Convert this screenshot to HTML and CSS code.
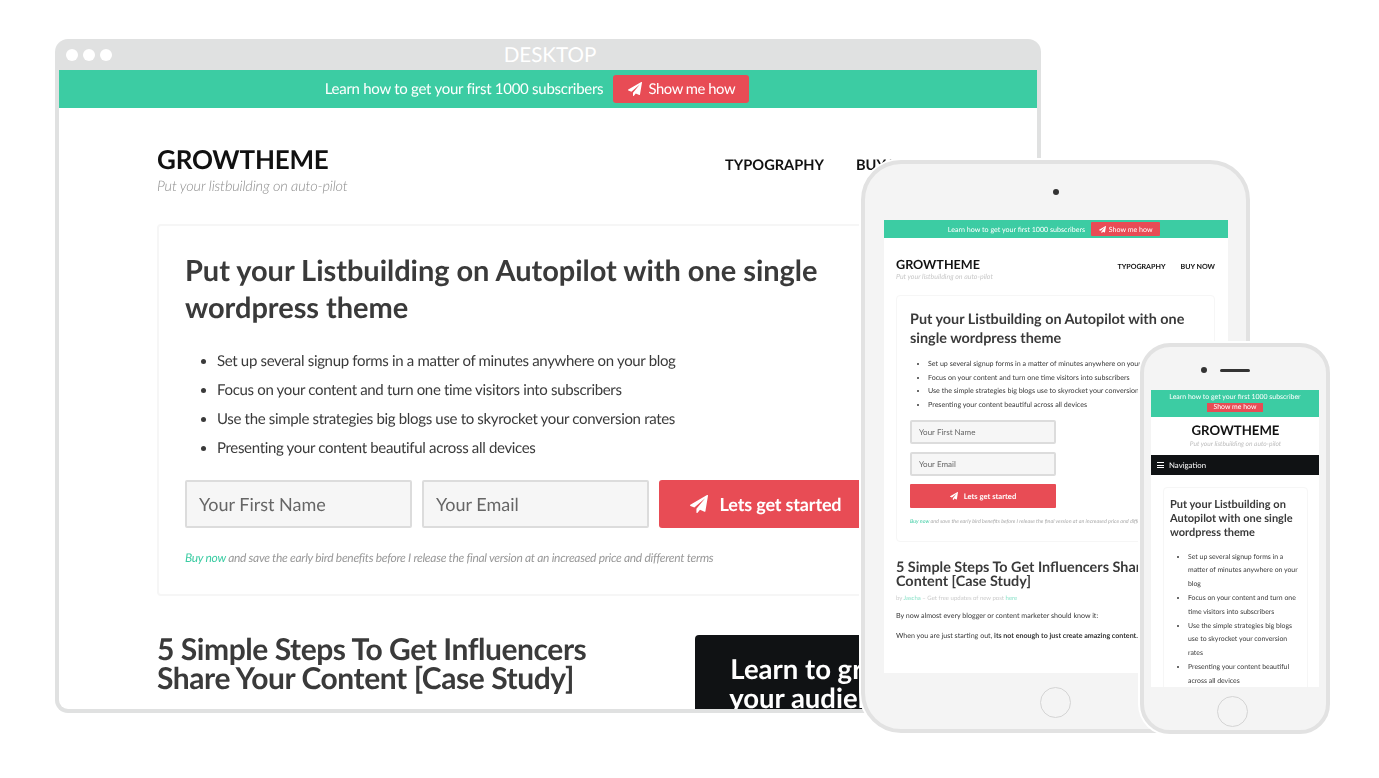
FILE: index.html
```html
<!DOCTYPE html>
<html lang="en">
<head>
<meta charset="utf-8">
<title>GrowTheme</title>
<link rel="stylesheet" href="styles.css">
</head>
<body>
<svg class="sprite" aria-hidden="true"><symbol id="plane" viewBox="0 0 1792 1792"><path d="M1764 11q33 24 27 64l-256 1536q-5 29-32 45-14 8-31 8-11 0-24-5l-453-185-242 295q-18 23-49 23-13 0-22-4-19-7-30.5-23.5t-11.5-36.5v-349l864-1059-1069 925-395-162q-37-14-40-55-2-40 32-59l1664-960q15-9 32-9 20 0 36 11z"/></symbol></svg>
<main class="stage">

  <section class="desktop">
    <div class="titlebar">
      <div class="dots"><i></i><i></i><i></i></div>
      <div class="title">DESKTOP</div>
    </div>
    <div class="screen">
      <div class="banner">
        <span>Learn how to get your first 1000 subscribers</span>
        <a class="banner-btn"><svg class="plane"><use href="#plane"/></svg>Show me how</a>
      </div>
      <div class="wrap">
        <header class="head">
          <div>
            <div class="logo">GROWTHEME</div>
            <div class="tag">Put your listbuilding on auto-pilot</div>
          </div>
          <nav class="nav"><a>TYPOGRAPHY</a><a>BUY NOW</a></nav>
        </header>
        <div class="card">
          <h1>Put your Listbuilding on Autopilot with one single wordpress theme</h1>
          <ul>
            <li>Set up several signup forms in a matter of minutes anywhere on your blog</li>
            <li>Focus on your content and turn one time visitors into subscribers</li>
            <li>Use the simple strategies big blogs use to skyrocket your conversion rates</li>
            <li>Presenting your content beautiful across all devices</li>
          </ul>
          <div class="form">
            <div class="field">Your First Name</div>
            <div class="field">Your Email</div>
            <a class="submit"><svg class="plane"><use href="#plane"/></svg>Lets get started</a>
          </div>
          <p class="note"><a>Buy now</a> and save the early bird benefits before I release the final version at an increased price and different terms</p>
        </div>
        <div class="lower">
          <h2>5 Simple Steps To Get Influencers Share Your Content [Case Study]</h2>
          <aside class="promo">Learn to grow<br>your audience</aside>
        </div>
      </div>
    </div>
  </section>

  <section class="tablet">
    <div class="camera"></div>
    <div class="screen">
      <div class="banner">
        <span>Learn how to get your first 1000 subscribers</span>
        <a class="banner-btn"><svg class="plane"><use href="#plane"/></svg>Show me how</a>
      </div>
      <div class="wrap">
        <header class="head">
          <div>
            <div class="logo">GROWTHEME</div>
            <div class="tag">Put your listbuilding on auto-pilot</div>
          </div>
          <nav class="nav"><a>TYPOGRAPHY</a><a>BUY NOW</a></nav>
        </header>
        <div class="card">
          <h1>Put your Listbuilding on Autopilot with one single wordpress theme</h1>
          <ul>
            <li>Set up several signup forms in a matter of minutes anywhere on your blog</li>
            <li>Focus on your content and turn one time visitors into subscribers</li>
            <li>Use the simple strategies big blogs use to skyrocket your conversion rates</li>
            <li>Presenting your content beautiful across all devices</li>
          </ul>
          <div class="form">
            <div class="field">Your First Name</div>
            <div class="field">Your Email</div>
            <a class="submit"><svg class="plane"><use href="#plane"/></svg>Lets get started</a>
          </div>
          <p class="note"><a>Buy now</a> and save the early bird benefits before I release the final version at an increased price and different terms</p>
        </div>
        <h2>5 Simple Steps To Get Influencers Share Your Content [Case Study]</h2>
        <p class="byline">by <a>Jascha</a> – Get free updates of new post <a>here</a></p>
        <p class="copy">By now almost every blogger or content marketer should know it:</p>
        <p class="copy">When you are just starting out, <b>its not enough to just create amazing content.</b></p>
      </div>
    </div>
    <div class="home"></div>
  </section>

  <section class="phone">
    <div class="earpiece"><div class="camera"></div><div class="speaker"></div></div>
    <div class="screen">
      <div class="banner">
        <span>Learn how to get your first 1000 subscriber</span>
        <a class="banner-btn">Show me how</a>
      </div>
      <div class="wrap">
        <div class="logo">GROWTHEME</div>
        <div class="tag">Put your listbuilding on auto-pilot</div>
      </div>
      <div class="mobile-nav"><span class="burger"><i></i><i></i><i></i></span>Navigation</div>
      <div class="card">
        <h1>Put your Listbuilding on Autopilot with one single wordpress theme</h1>
        <ul>
          <li>Set up several signup forms in a matter of minutes anywhere on your blog</li>
          <li>Focus on your content and turn one time visitors into subscribers</li>
          <li>Use the simple strategies big blogs use to skyrocket your conversion rates</li>
          <li>Presenting your content beautiful across all devices</li>
        </ul>
      </div>
    </div>
    <div class="home"></div>
  </section>

</main>
</body>
</html>
```

FILE: styles.css
```css
* { box-sizing: border-box; }
html, body { margin: 0; height: 100%; background: #fff; overflow: hidden; }
body { font-family: Lato, "Noto Sans", sans-serif; color: #3a3a3a; text-rendering: geometricPrecision; }
.sprite { display: none; }
.stage { position: relative; width: 1379px; height: 778px; }
h1, h2, p, ul { margin: 0; padding: 0; }
.plane { fill: #fff; flex: none; }
.banner, .banner-btn, .submit { display: flex; align-items: center; justify-content: center; color: #fff; }
.banner { background: #3ccca3; }
.banner-btn, .submit { background: #e84c55; }
.logo { font-weight: 700; color: #111; }
.tag { font-weight: 300; font-style: italic; color: #8c8c8c; }
.head { display: flex; justify-content: space-between; }
.nav { display: flex; font-weight: 700; color: #111; }
.card { background: #fff; border: 2px solid #f6f6f6; border-radius: 4px; }
h1, h2 { font-weight: 700; color: #3a3a3a; }
.field { background: #f6f6f6; border: 2px solid #dcdcdc; border-radius: 2px; display: flex; align-items: center; color: #666; }
.form { display: flex; }
.note { font-style: italic; color: #999; white-space: nowrap; }
.note a, .byline a { color: #3ccca3; }

/* Desktop window */
.desktop { position: absolute; left: 55px; top: 39px; width: 986px; height: 674px; background: #e0e1e1; border-radius: 13px; padding: 0 4px 4px; display: flex; flex-direction: column; }
.titlebar { height: 31px; flex: none; position: relative; display: flex; align-items: center; justify-content: center; }
.dots { position: absolute; left: 7px; top: 10px; display: flex; gap: 5px; }
.dots i { width: 12px; height: 12px; border-radius: 50%; background: #fff; }
.title { color: #fff; font-size: 20.6px; line-height: 31px; padding: 1px 0 0 4px; }
.desktop .screen { flex: 1; min-height: 0; background: #fff; overflow: hidden; border-radius: 0 0 9px 9px; filter: blur(0.25px); }
.desktop .banner { height: 38px; font-size: 15px; letter-spacing: -0.27px; gap: 10px; padding-right: 22px; padding-bottom: 1px; }
.desktop .banner-btn { width: 136px; height: 28px; border-radius: 3px; font-size: 14.8px; letter-spacing: -0.45px; }
.desktop .banner-btn .plane { width: 14px; height: 14px; margin-right: 7px; }
.desktop .wrap { width: 1000px; margin-left: 98px; }
.desktop .head { width: 770px; padding-top: 35px; height: 116px; }
.desktop .logo { font-size: 26px; letter-spacing: -0.2px; line-height: 32px; }
.desktop .tag { font-size: 14.5px; letter-spacing: -0.15px; line-height: 20px; margin-top: 2px; }
.desktop .nav { gap: 32px; font-size: 14.6px; line-height: 18px; padding-top: 14px; }
.desktop .card { width: 880px; height: 372px; padding: 26px 26px 0; }
.desktop h1 { font-size: 29px; letter-spacing: -0.04px; line-height: 37px; width: 660px; }
.desktop ul { padding: 21px 0 0 32px; font-size: 15px; letter-spacing: -0.33px; line-height: 29px; }
.desktop .form { gap: 10px; margin-top: 17px; }
.desktop .field { width: 227px; height: 48px; padding-left: 12px; font-size: 18px; }
.desktop .submit { width: 227px; height: 48px; border-radius: 3px; font-size: 18px; letter-spacing: -0.15px; font-weight: 700; padding-right: 14px; }
.desktop .submit .plane { width: 18px; height: 18px; margin-right: 12px; }
.desktop .note { font-size: 12px; letter-spacing: -0.3px; line-height: 16px; margin-top: 22px; }
.lower { display: flex; justify-content: space-between; width: 778px; margin-top: 39px; }
.desktop h2 { font-size: 30px; letter-spacing: -0.44px; line-height: 29px; width: 460px; flex: none; }
.promo { width: 240px; flex: none; height: 120px; background: #101214; color: #fff; font-size: 27.5px; line-height: 29px; font-weight: 700; text-align: center; padding-top: 19px; border-radius: 4px; white-space: nowrap; }

/* Tablet */
.tablet { position: absolute; left: 861px; top: 160px; width: 389px; height: 573px; background: #f4f4f4; border: 4px solid #e2e2e2; border-radius: 40px; box-shadow: 0 0 0 2px #fff; }
.tablet .camera { position: absolute; left: 188px; top: 25px; width: 6px; height: 6px; border-radius: 50%; background: #333; }
.tablet .screen { position: absolute; left: 19px; top: 56px; width: 344px; height: 453px; background: #fff; overflow: hidden; filter: blur(0.3px); }
.tablet .banner { height: 18px; font-size: 7.1px; gap: 6px; padding-right: 4px; }
.tablet .banner-btn { width: 69px; height: 14px; border-radius: 1px; }
.tablet .banner-btn .plane { width: 7px; height: 7px; margin-right: 3px; }
.tablet .wrap { width: 319px; margin-left: 12px; }
.tablet .head { height: 57px; padding-top: 19px; }
.tablet .logo { font-size: 12.6px; line-height: 16px; }
.tablet .tag { font-size: 7px; line-height: 9px; font-weight: 400; color: #c8c8c8; }
.tablet .nav { gap: 15px; font-size: 7.1px; line-height: 10px; padding-top: 5px; }
.tablet .card { height: 247px; padding: 14px 13px 0; border-width: 1px; }
.tablet h1 { font-size: 14.4px; line-height: 19px; }
.tablet ul { padding: 9px 0 0 18px; font-size: 7.1px; line-height: 13.7px; white-space: nowrap; }
.tablet .form { flex-direction: column; gap: 8px; margin-top: 8px; width: 146px; }
.tablet .field { height: 24px; padding-left: 7px; font-size: 8px; }
.tablet .submit { height: 24px; border-radius: 1px; font-size: 7.6px; font-weight: 700; }
.tablet .submit .plane { width: 8px; height: 8px; margin-right: 6px; }
.tablet .note { font-size: 5.4px; line-height: 8px; margin-top: 10px; color: #aaa; }
.tablet h2 { font-size: 14.4px; line-height: 14px; margin-top: 19px; width: 300px; }
.tablet .byline { font-size: 6px; line-height: 8px; margin-top: 6px; color: #ccc; }
.tablet .byline a { color: #8fe3cb; }
.tablet .copy { font-size: 7.1px; line-height: 10px; margin-top: 8px; white-space: nowrap; }
.tablet .copy + .copy { margin-top: 10px; }
.tablet .copy b { color: #333; }
.tablet .home { position: absolute; left: 175px; top: 523px; width: 31px; height: 31px; border: 1px solid #d4d4d4; border-radius: 50%; }

/* Phone */
.phone { position: absolute; left: 1140px; top: 343px; width: 190px; height: 391px; background: #f4f4f4; border: 4px solid #e2e2e2; border-radius: 30px; box-shadow: 0 0 0 2px #fff; }
.earpiece { position: absolute; left: 57px; top: 20px; display: flex; align-items: center; gap: 13px; }
.phone .camera { width: 6px; height: 6px; border-radius: 50%; background: #333; }
.speaker { width: 30px; height: 3px; border-radius: 2px; background: #333; }
.phone .screen { position: absolute; left: 7px; top: 43px; width: 168px; height: 297px; background: #fff; overflow: hidden; filter: blur(0.3px); }
.phone .banner { height: 27px; flex-direction: column; justify-content: flex-start; padding-top: 2px; font-size: 6.95px; line-height: 10px; white-space: nowrap; }
.phone .banner-btn { width: 56px; height: 9px; margin-top: 1px; line-height: 9px; }
.phone .wrap { height: 38px; text-align: center; padding-left: 1px; }
.phone .logo { font-size: 13.2px; line-height: 14px; padding-top: 6px; height: 20px; }
.phone .tag { font-size: 6.6px; line-height: 8px; margin-top: 3px; font-weight: 400; color: #bdbdbd; }
.mobile-nav { display: flex; align-items: center; height: 20px; background: #101214; color: #fff; font-size: 7.8px; padding-left: 6px; }
.burger { display: flex; flex-direction: column; gap: 1.5px; width: 7px; margin-right: 5px; }
.burger i { height: 1px; background: #fff; }
.phone .card { width: 145px; height: 220px; margin: 12px 0 0 12px; padding: 10px 6px 0; border-width: 1px; }
.phone h1 { font-size: 11px; line-height: 14.2px; }
.phone ul { padding: 10px 0 0 18px; font-size: 6.9px; line-height: 13.8px; }
.phone .home { position: absolute; left: 73px; top: 349px; width: 31px; height: 31px; border: 1px solid #d4d4d4; border-radius: 50%; }
```
